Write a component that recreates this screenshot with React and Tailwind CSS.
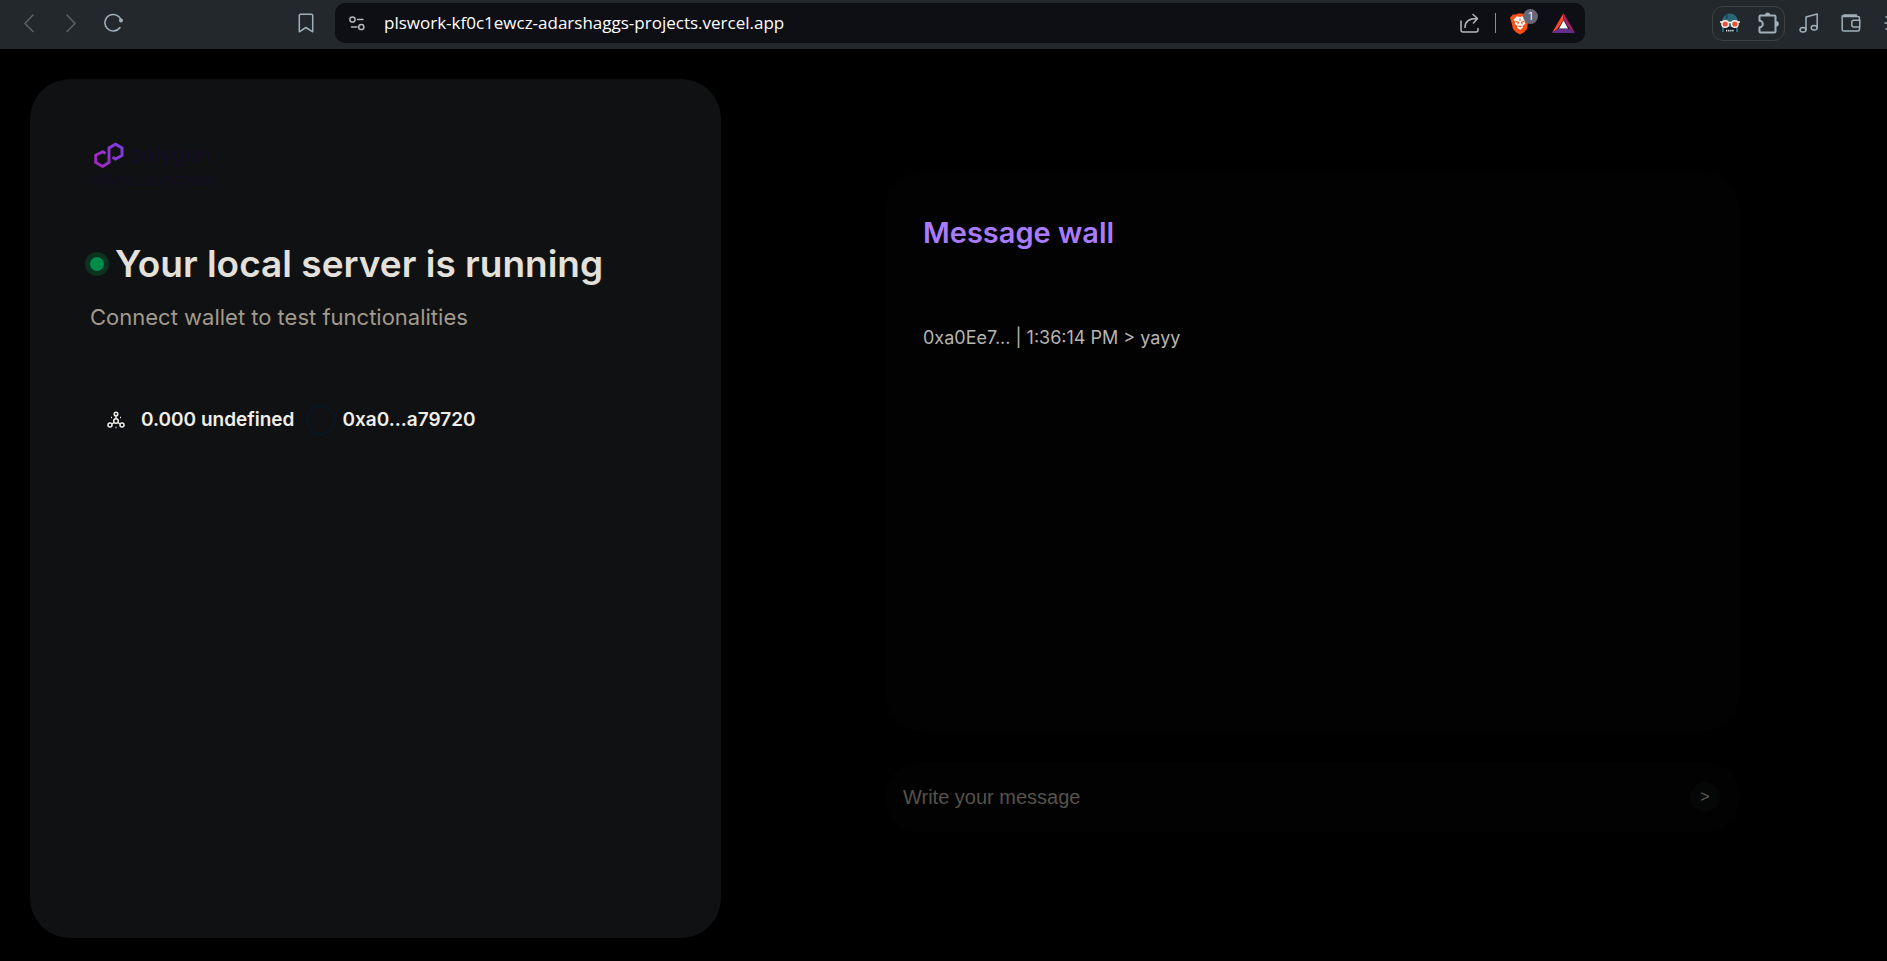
import React from 'react';

const icon = {
  fill: 'none',
  stroke: 'currentColor',
  strokeWidth: 1.5,
  strokeLinecap: 'round',
  strokeLinejoin: 'round',
};

function NavButton({ label, className, children }) {
  return (
    <button type="button" aria-label={label} className={`flex shrink-0 items-center justify-center ${className}`}>
      {children}
    </button>
  );
}

function BrowserBar() {
  return (
    <header className="flex h-[49px] shrink-0 items-center overflow-hidden bg-[#23282c] pb-[3px] text-[#9fb0ba]">
      <NavButton label="Back" className="ml-[19px] size-5 text-[#5b6367]">
        <svg width="20" height="20" viewBox="0 0 20 20" {...icon}><path d="M14 2 6 10.500l8 8" /></svg>
      </NavButton>
      <NavButton label="Forward" className="ml-[22px] size-5 text-[#5b6367]">
        <svg width="20" height="20" viewBox="0 0 20 20" {...icon}><path d="m6 2 8 8.500-8 8" /></svg>
      </NavButton>
      <NavButton label="Reload" className="ml-[22px] size-5">
        <svg width="20" height="20" viewBox="0 0 20 20" {...icon}>
          <path d="M18.200 7.500A8.300 8.300 0 1 0 17 14.500" />
          <circle cx="18" cy="7.500" r="2" fill="currentColor" stroke="none" />
        </svg>
      </NavButton>
      <NavButton label="Bookmark this page" className="ml-[173px] size-5">
        <svg width="20" height="20" viewBox="0 0 20 20" {...icon}>
          <path d="M4.500 1.300h11a1.200 1.200 0 0 1 1.200 1.200v16.300L10 14.500l-6.700 4.300V2.500a1.200 1.200 0 0 1 1.200-1.200Z" />
        </svg>
      </NavButton>
      <div className="ml-[19px] flex h-10 w-[1250px] min-w-0 shrink items-center rounded-[10px] bg-[#0e0f14] pr-[10px] pl-3 text-[#b4b7ba]">
        <NavButton label="Site information" className="size-5">
          <svg width="20" height="20" viewBox="0 0 20 20" {...icon}>
            <circle cx="5.500" cy="6.500" r="2.600" /><path d="M10.500 6.500h5.500" />
            <circle cx="14.300" cy="14" r="2.600" /><path d="M4.500 14h5.500" />
          </svg>
        </NavButton>
        <input
          type="text"
          aria-label="Address"
          defaultValue="plswork-kf0c1ewcz-adarshaggs-projects.vercel.app"
          className="ml-[17px] min-w-0 flex-1 bg-transparent font-['Open_Sans','Noto_Sans',sans-serif] text-[17px] text-white outline-none"
        />
        <NavButton label="Share" className="size-5">
          <svg width="20" height="20" viewBox="0 0 20 20" {...icon}>
            <path d="M1 8v9a2 2 0 0 0 2 2h13a2 2 0 0 0 2-2v-1.500M5 14.500C5 9 8.500 5.500 17 5.500M13 1.500l4.500 4-4 4.500" />
          </svg>
        </NavButton>
        <span className="mr-[14px] ml-[15px] h-5 w-px bg-[#8a8d91]" />
        <button type="button" aria-label="Shields, 1 blocked" className="relative size-5">
          <svg width="20" height="22" viewBox="0 0 20 22">
            <path d="m3 1.500 3 0L8 .5h4l2 1h3l2 3-.8 3L17 16l-3 3.200L10 21.500 6 19.200 3 16 1 7.500 0 4.500Z" fill="#fb4f14" />
            <path d="m10 4 3-.7 3.500 3.500-1.700 2 .4 2-2.700 2.200.6 1.300L10 17l-3.100-2.700.6-1.300-2.700-2.200.4-2-1.700-2L7 3.300Z" fill="#fff" />
            <path d="m5.500 8.300 3 1-.8 2m6.800-3-3 1 .8 2M8.500 13l1.500.8 1.500-.8M10 5.500V8" fill="none" stroke="#fb4f14" strokeWidth="1.100" />
          </svg>
          <span className="absolute -top-1 left-[13px] flex size-[15px] items-center justify-center rounded-full bg-[#656775] font-['Inter',sans-serif] text-[10px] text-white">1</span>
        </button>
        <button type="button" aria-label="Rewards" className="ml-[22px]">
          <svg width="23" height="20" viewBox="0 0 23 20">
            <path d="M11.500 0 0 20l5.500-4 6-9Z" fill="#ff4724" />
            <path d="M11.500 0 23 20l-5.500-4-6-9Z" fill="#9e1f63" />
            <path d="M0 20h23l-5.500-4h-12Z" fill="#662d91" />
            <path d="m11.500 7.500 4.500 8H7Z" fill="#fff" />
          </svg>
        </button>
      </div>
      <div className="ml-auto flex shrink-0 items-center pl-4">
        <div className="flex h-[35px] w-[73px] items-center justify-between rounded-[11px] border border-[#3c4144] pr-[5px] pl-[7px]">
          <button type="button" aria-label="Wallet extension">
            <svg width="20" height="20" viewBox="0 0 20 20">
              <path d="M2 19V9a8 8.500 0 0 1 16 0v10Z" fill="#286879" />
              <path d="M4 19v-5h12v5Z" fill="#101820" />
              <path d="M7 1.500v4" stroke="#17404d" strokeWidth="1.500" />
              <circle cx="5.200" cy="11" r="3.300" fill="#e5533a" stroke="#fff3e8" strokeWidth="1.400" />
              <circle cx="14.800" cy="11" r="3.300" fill="#e5533a" stroke="#fff3e8" strokeWidth="1.400" />
              <path d="M8.500 9.500h3M0 9h2m16 0h2" stroke="#fff3e8" strokeWidth="1.400" />
              <path d="M6 17.700h8" stroke="#e7eef0" strokeWidth="1.700" strokeDasharray="1.300 .8" />
            </svg>
          </button>
          <button type="button" aria-label="Extensions">
            <svg width="22" height="22" viewBox="0 0 22 22" fill="none" stroke="currentColor" strokeWidth="2" strokeLinejoin="round">
              <path d="M3.500 3.500h14a1 1 0 0 1 1 1v15a1 1 0 0 1-1 1h-14a1 1 0 0 1-1-1v-4.200a3.200 3.200 0 0 0 0-6.600V4.500a1 1 0 0 1 1-1Z" />
              <path d="M8 3a2.600 2.600 0 0 1 5.200 0ZM19 9a2.800 2.800 0 0 1 0 5.600Z" fill="currentColor" stroke="none" />
            </svg>
          </button>
        </div>
        <NavButton label="Media" className="ml-[14px] size-5">
          <svg width="20" height="20" viewBox="0 0 20 20" {...icon}>
            <ellipse cx="4" cy="16.800" rx="3" ry="2.300" /><ellipse cx="15.200" cy="14.800" rx="3" ry="2.300" />
            <path d="M7 16.500V4l11.200-3v13.500" />
          </svg>
        </NavButton>
        <NavButton label="Wallet" className="ml-[22px] size-5">
          <svg width="20" height="20" viewBox="0 0 20 20" {...icon}>
            <path d="M18.500 7V5.200a1.600 1.600 0 0 0-1.600-1.600H2.800A1.600 1.600 0 0 1 2.800 2h12.700M1.200 2.800v13.600A1.600 1.600 0 0 0 2.800 18h14.100a1.600 1.600 0 0 0 1.600-1.600v-2.200M18.800 7.200h-6a2 2 0 0 0-2 2v2.800a2 2 0 0 0 2 2h6Z" />
          </svg>
        </NavButton>
        <NavButton label="Menu" className="ml-[21px] w-[5px] overflow-hidden">
          <svg width="5" height="20" viewBox="0 0 5 20" {...icon}><path d="M4 4h8M3 10h9M4 16h8" /></svg>
        </NavButton>
      </div>
    </header>
  );
}

function PolygonMark() {
  return (
    <svg width="30" height="26" viewBox="0 0 30 26" fill="none" aria-hidden="true">
      <defs>
        <linearGradient id="polygon-mark" x1="0" y1="22" x2="30" y2="4" gradientUnits="userSpaceOnUse">
          <stop stopColor="#a726c1" />
          <stop offset="1" stopColor="#7b3fe4" />
        </linearGradient>
      </defs>
      <path
        d="m11.500 11.500-2.800-1.900L1.700 13.300v7.200l7 3.900 6.300-3.900V5.900l6.500-3.700 6.500 3.700v7.500l-6.500 3.600-3-1.800"
        stroke="url(#polygon-mark)"
        strokeWidth="2.900"
      />
    </svg>
  );
}

function ServerCard() {
  return (
    <section className="w-[691px] shrink rounded-[40px] bg-[#0f1112] px-[60px] pt-[63px]">
      <div className="font-['Inter',sans-serif] text-[#140d24]">
        <div className="flex h-[26px] items-center gap-[6px] pl-1">
          <PolygonMark />
          <span className="text-[21px] leading-6 font-medium">polygon</span>
        </div>
        <p className="text-[15px] leading-6">/dApp Launchpad</p>
      </div>
      <h1 className="mt-[47px] -ml-[5px] flex items-center gap-[6px] font-['Inter',sans-serif] text-[37px] leading-[50px] font-semibold whitespace-nowrap text-[#e4e0da]">
        <span className="size-6 shrink-0 rounded-full border-[5px] border-[#0c3322] bg-[#038b4b]" />
        Your local server is running
      </h1>
      <p className="mt-[14px] font-['Inter',sans-serif] text-[22px] leading-7 text-[#a39a8e]">
        Connect wallet to test functionalities
      </p>
      <div className="mt-[59px] flex h-[60px] items-center pl-[17px] font-['Inter',sans-serif] text-[19px] font-semibold whitespace-nowrap text-[#f0eee9]">
        <svg width="18" height="18" viewBox="0 0 18 18" fill="none" stroke="currentColor" strokeWidth="1.500" aria-hidden="true">
          <circle cx="9" cy="3" r="1.800" /><circle cx="9" cy="10" r="2.300" />
          <circle cx="3" cy="14" r="2" /><circle cx="15" cy="14" r="2" />
          <path d="M9 5v2.500M7 11.500 5 13m6-1.500 2 1.500" />
          <path d="M4 6.500h1m8 0h1M8.500 16.500h1" />
        </svg>
        <span className="ml-4">0.000 undefined</span>
        <button type="button" className="ml-3 flex items-center gap-[6px]">
          <span className="size-[30px] rounded-full border-2 border-[#0b1523]" />
          0xa0...a79720
        </button>
      </div>
    </section>
  );
}

function MessageWall() {
  return (
    <section className="flex flex-1 flex-col pt-[92px] pr-[147px] pl-[164px]">
      <div className="h-[561px] rounded-[40px] bg-[#020202] px-[38px] pt-10">
        <h2 className="font-['Inter',sans-serif] text-[29px] leading-[44px] font-semibold text-[#a97bff]">Message wall</h2>
        <p className="mt-[69px] font-['Inter',sans-serif] text-[18px] leading-7 text-[#b5b5b3]">
          0xa0Ee7... | 1:36:14 PM &gt; yayy
        </p>
      </div>
      <form className="mt-[30px] flex h-[70px] items-center rounded-[35px] bg-[#020202] pr-5 pl-[18px]" onSubmit={(e) => e.preventDefault()}>
        <input
          type="text"
          aria-label="Write your message"
          placeholder="Write your message"
          className="min-w-0 flex-1 bg-transparent font-['Liberation_Sans',sans-serif] text-[20px] text-[#b5b5b3] outline-none placeholder:text-[#56524c]"
        />
        <button type="submit" aria-label="Send" className="size-[30px] rounded-full bg-[#050707] font-['Liberation_Sans',sans-serif] text-[16px] leading-7 text-[#62605e]">
          &gt;
        </button>
      </form>
    </section>
  );
}

export default function App() {
  return (
    <div className="flex min-h-screen flex-col bg-black">
      <BrowserBar />
      <main className="flex flex-1 pt-[30px] pb-[23px] pl-[30px]">
        <ServerCard />
        <MessageWall />
      </main>
    </div>
  );
}
